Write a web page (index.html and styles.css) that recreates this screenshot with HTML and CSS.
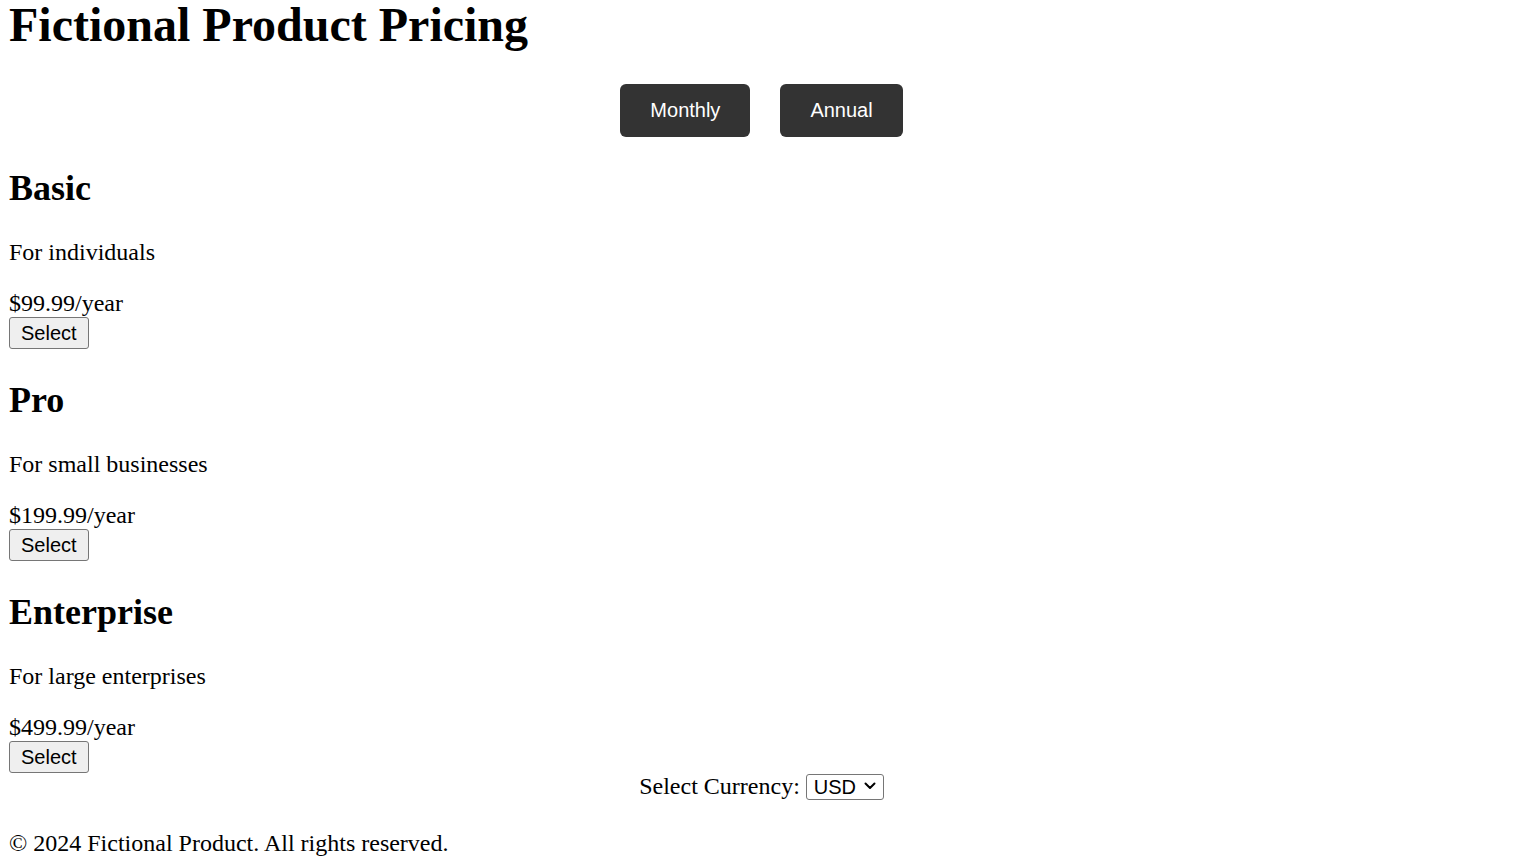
FILE: index.html
```html
<!DOCTYPE html>
<html lang="en">
<head>
<meta charset="utf-8">
<title>Fictional Product Pricing</title>
<link rel="stylesheet" href="styles.css">
</head>
<body>
<h1 class="title">Fictional Product Pricing</h1>
<div class="toggle">
  <button class="toggle-btn">Monthly</button>
  <button class="toggle-btn">Annual</button>
</div>
<div class="plans">
  <div class="plan">
    <h2 class="plan-name">Basic</h2>
    <p class="plan-desc">For individuals</p>
    <div class="plan-price">$99.99/year</div>
    <button class="select-btn">Select</button>
  </div>
  <div class="plan">
    <h2 class="plan-name">Pro</h2>
    <p class="plan-desc">For small businesses</p>
    <div class="plan-price">$199.99/year</div>
    <button class="select-btn">Select</button>
  </div>
  <div class="plan">
    <h2 class="plan-name">Enterprise</h2>
    <p class="plan-desc">For large enterprises</p>
    <div class="plan-price">$499.99/year</div>
    <button class="select-btn">Select</button>
  </div>
</div>
<div class="currency">
  <label class="currency-label" for="cur">Select Currency:</label>
  <span class="select-wrap"><select id="cur" class="currency-select">
    <option>USD</option>
    <option>EUR</option>
    <option>GBP</option>
  </select><svg class="chevron" width="12" height="8" viewBox="0 0 12 8"><path d="M1.5 1.5 L6 6 L10.5 1.5" fill="none" stroke="#000" stroke-width="2" stroke-linecap="round" stroke-linejoin="round"/></svg></span>
</div>
<footer class="footer">
  <p class="footer-text">© 2024 Fictional Product. All rights reserved.</p>
</footer>
</body>
</html>
```
FILE: styles.css
```css
html, body {
  background: #fff;
}
body {
  margin: 0 11px 0 9px;
  font-family: "Liberation Serif", "Times New Roman", serif;
  font-size: 24px;
  color: #000;
}
.title {
  font-size: 48px;
  font-weight: bold;
  margin: -3px 0 32px;
}
.toggle {
  display: flex;
  justify-content: center;
  gap: 30px;
}
.toggle-btn {
  font-family: "Liberation Sans", Arial, sans-serif;
  font-size: 20px;
  line-height: 23px;
  padding: 15px 30px;
  background: #333;
  color: #fff;
  border: none;
  border-radius: 6px;
}
.plan-name {
  font-size: 36px;
  font-weight: bold;
  margin: 30px 0;
}
.plan-desc {
  margin: 24px 0;
}
.plan-price {
  line-height: 26px;
}
.select-btn {
  display: block;
  font-family: "Liberation Sans", Arial, sans-serif;
  font-size: 20px;
  line-height: 23px;
  padding: 4px 11px 3px;
  margin-top: 1px;
  background: #efefef;
  color: #000;
  border: 1px solid #767676;
  border-radius: 3px;
}
.currency {
  text-align: center;
}
.select-wrap {
  position: relative;
  display: inline-block;
}
.currency-select {
  -webkit-appearance: none;
  appearance: none;
  font-family: "Liberation Sans", Arial, sans-serif;
  font-size: 20px;
  height: 26px;
  width: 78px;
  padding: 0 0 0 7px;
  border: 1px solid #767676;
  border-radius: 3px;
  background: #fff;
  color: #000;
}
.chevron {
  position: absolute;
  right: 8px;
  top: 9px;
  pointer-events: none;
}
.footer-text {
  margin: 30px 0 24px;
}
```
